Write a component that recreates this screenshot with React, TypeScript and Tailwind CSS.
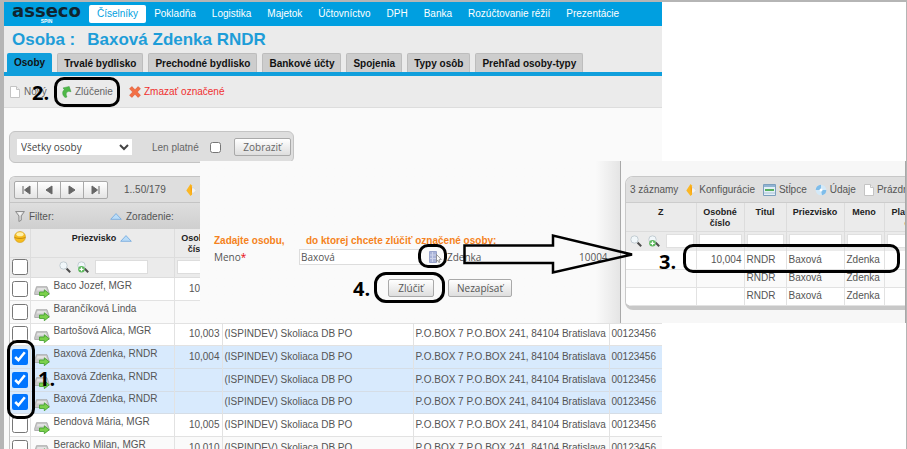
import type { ReactNode } from "react";

const NAV = [
  "Číselníky",
  "Pokladňa",
  "Logistika",
  "Majetok",
  "Účtovníctvo",
  "DPH",
  "Banka",
  "Rozúčtovanie réžií",
  "Prezentácie",
];

const TABS = [
  "Osoby",
  "Trvalé bydlisko",
  "Prechodné bydlisko",
  "Bankové účty",
  "Spojenia",
  "Typy osôb",
  "Prehľad osoby-typy",
];

const COMPANY = "(ISPINDEV) Skoliaca DB PO";
const ADDRESS = "P.O.BOX 7 P.O.BOX 241, 84104 Bratislava";

const PEOPLE = [
  { id: 1, name: "Baco Jozef, MGR", number: "10,001", selected: false },
  { id: 2, name: "Barančíková Linda", number: "", selected: false },
  { id: 3, name: "Bartošová Alica, MGR", number: "10,003", selected: false },
  { id: 4, name: "Baxová Zdenka, RNDR", number: "10,004", selected: true },
  { id: 5, name: "Baxová Zdenka, RNDR", number: "", selected: true },
  { id: 6, name: "Baxová Zdenka, RNDR", number: "", selected: true },
  { id: 7, name: "Bendová Mária, MGR", number: "10,005", selected: false },
  { id: 8, name: "Beracko Milan, MGR", number: "10,010", selected: false },
];

const MATCHES = [
  { id: 1, number: "10,004" },
  { id: 2, number: "" },
  { id: 3, number: "" },
];

const PageIcon = () => (
  <svg className="h-3 w-[10px] shrink-0" viewBox="0 0 10 12">
    <path d="M.5.5h6l3 3v8h-9z" fill="#fff" stroke="#c4c4c4" />
    <path d="M6.5.5v3h3" fill="#eee" stroke="#c4c4c4" />
  </svg>
);

const MergeIcon = () => (
  <svg className="h-3 w-[10px] shrink-0" viewBox="0 0 10 12">
    <path
      d="M3.200 11.600C.2 9.500-.2 5.500 2.300 3.700L1 1.900 7.200.5 9 5.700 6.800 5.300C4.300 5.800 3.300 8.200 5 11z"
      fill="#4fb848"
      stroke="#3a9a3f"
      strokeWidth=".5"
    />
  </svg>
);

const DeleteIcon = () => (
  <svg className="h-3 w-3 shrink-0" viewBox="0 0 12 12">
    <path
      d="M2.800.6 6 3.700 9.200.6l2.200 2.200L8.300 6l3.100 3.200-2.200 2.200L6 8.300l-3.200 3.100L.6 9.200 3.700 6 .6 2.800z"
      fill="#f27045"
      stroke="#dc5433"
      strokeWidth=".6"
    />
  </svg>
);

const BoltIcon = () => (
  <svg className="h-3 w-[10px] shrink-0" viewBox="0 0 10 12">
    <path d="M5 4h3l2 2.500L8 9H5z" fill="#f3f3f3" stroke="#cfcfcf" strokeWidth=".5" />
    <path d="M4.500 0 6 1.500v9L4.500 12 .3 6.500z" fill="#fbb724" />
    <path d="M4.500 1 6 5 5 11z" fill="#f59a0b" />
  </svg>
);

const FunnelIcon = () => (
  <svg className="h-3 w-[10px] shrink-0" viewBox="0 0 10 12">
    <path d="M.6 1.500h8.800L6.300 6v4.200l-2.400 1.300V6z" fill="#ddd" stroke="#8d8d8d" />
    <path d="M3 2.500h4L5 5.500z" fill="#f5f5f5" />
  </svg>
);

const SortIcon = () => (
  <svg className="h-[7px] w-3 shrink-0" viewBox="0 0 12 7">
    <path d="M6 .6 11.300 6.300H.7z" fill="#b9dcf8" stroke="#6fa6dd" strokeWidth=".8" />
  </svg>
);

const SearchIcon = ({ plus = false }: { plus?: boolean }) => (
  <svg className="h-3 w-3 shrink-0" viewBox="0 0 12 12">
    <path d="m7.500 7.500 3.700 3.700" stroke="#4d4d4d" strokeWidth="2" />
    <circle cx="4.500" cy="4.500" r="3.700" fill="#f1f7fa" stroke="#c2ccd2" />
    {plus && (
      <>
        <circle cx="4.500" cy="8.300" r="3.300" fill="#5cb85c" />
        <path d="M2.500 8.300h4M4.500 6.300v4" stroke="#fff" strokeWidth="1.200" />
      </>
    )}
  </svg>
);

const GoIcon = () => (
  <svg className="h-3 w-4 shrink-0" viewBox="0 0 16 12">
    <path d="M2.500.7h10.500L15 6.500v2H.7v-2z" fill="#c9c9c9" stroke="#a3a3a3" strokeWidth=".8" />
    <path d="M3.500 2h8.500l.8 2.500H2.700z" fill="#e2e2e2" />
    <path
      d="M5.500 6h4.800V3.800l5 4-5 3.900V9.500H5.500z"
      fill="#7bd04b"
      stroke="#3d9c2a"
      strokeWidth=".8"
    />
  </svg>
);

const BallIcon = () => (
  <svg className="h-3 w-3 shrink-0" viewBox="0 0 12 12">
    <circle cx="6" cy="6" r="5.500" fill="#f7bd1e" stroke="#cf9a1c" strokeWidth=".6" />
    <ellipse cx="6" cy="3.300" rx="3.600" ry="2" fill="#fff0a8" />
    <path d="M.6 6.500c3 1.300 7.800 1.300 10.800 0" stroke="#c58b0d" fill="none" />
  </svg>
);

const ColumnsIcon = () => (
  <svg className="h-3 w-[13px] shrink-0" viewBox="0 0 13 12">
    <path d="M.5.5h12v11H.5z" fill="#e4eff7" stroke="#7c9fbd" />
    <path d="M1 1h11v2H1z" fill="#8fb3d3" />
    <path d="M2 5h9v2H2z" fill="#55ae5e" />
    <path d="M1 9h11" stroke="#a9c3d8" />
  </svg>
);

const DataIcon = () => (
  <svg className="h-3 w-3 shrink-0" viewBox="0 0 12 12">
    <circle cx="6" cy="6" r="5.300" fill="#d3e9f8" />
    <path d="M.7 6A5.300 5.300 0 0 1 6 .7L6 6zM6 6h5.300A5.300 5.300 0 0 1 7 11.200z" fill="#7fbdea" />
    <circle cx="6" cy="6" r="1.500" fill="#fff" />
  </svg>
);

const LookupIcon = () => (
  <svg className="h-3 w-[13px]" viewBox="0 0 13 12">
    <path d="M.5.5h7v11h-7z" fill="#a9b3d8" stroke="#98a3cb" />
    <path d="M1 4h6M1 7.500h6M3.500 1v10" stroke="#cdd3ea" />
    <path
      d="m7.500 3.500 4.800 5-2.300.2 1 2.300-1.200.5-1-2.300-1.300 1.500z"
      fill="#fff"
      stroke="#777"
      strokeWidth=".7"
    />
  </svg>
);

const PAGER = [
  { label: "Prvá strana", d: "M3 1v8M10 1v8L4.500 5z" },
  { label: "Predchádzajúca strana", d: "M9 1v8L3 5z" },
  { label: "Nasledujúca strana", d: "M3 1v8l6-4z" },
  { label: "Posledná strana", d: "M2 1v8l5.500-4zM9 1v8" },
];

const GreyButton = ({ className, children }: { className: string; children: ReactNode }) => (
  <button
    type="button"
    className={`flex h-[18px] items-center justify-center rounded-[2px] border border-[#a9a9a9] bg-linear-to-b from-white to-[#dedede] font-['Open_Sans',sans-serif] ${className}`}
  >
    {children}
  </button>
);

const Ring = ({ className }: { className: string }) => (
  <div className={`pointer-events-none absolute border-[3px] border-black ${className}`} />
);

const Step = ({ className, children }: { className: string; children: ReactNode }) => (
  <span
    className={`pointer-events-none absolute font-['Open_Sans',sans-serif] text-[20px] leading-5 font-bold text-black ${className}`}
  >
    {children}
  </span>
);

const PeopleTable = () => (
  <table className="w-full table-fixed border-collapse bg-white text-[#555]">
    <colgroup>
      <col className="w-[20px]" />
      <col className="w-[144px]" />
      <col className="w-[48px]" />
      <col className="w-[191px]" />
      <col className="w-[196px]" />
      <col />
    </colgroup>
    <thead className="bg-[#ebebeb] text-[9px] leading-[11px] text-[#222]">
      <tr className="h-7 border-b border-[#ddd] align-top">
        <th className="border-r border-[#ddd] pt-[2px]">
          <span className="flex justify-center">
            <BallIcon />
          </span>
        </th>
        <th className="border-r border-[#ddd] pt-1">
          <span className="flex items-center justify-center gap-1">
            Priezvisko <SortIcon />
          </span>
        </th>
        <th className="border-r border-[#ddd] pt-1">
          Osobné
          <br />
          číslo
        </th>
        <th className="border-r border-[#ddd]" />
        <th className="border-r border-[#ddd]" />
        <th />
      </tr>
      <tr className="h-5 border-b border-[#ddd]">
        <td className="border-r border-[#ddd]">
          <input type="checkbox" aria-label="Označiť všetko" className="mx-auto block size-4" />
        </td>
        <td className="border-r border-[#ddd]">
          <div className="flex items-center gap-[6px] pl-7">
            <SearchIcon />
            <SearchIcon plus />
            <input aria-label="Priezvisko" className="h-[14px] w-[53px] border border-[#ddd] bg-white" />
          </div>
        </td>
        <td className="border-r border-[#ddd] px-[2px]">
          <input aria-label="Osobné číslo" className="block h-[14px] w-full border border-[#ddd] bg-white" />
        </td>
        <td className="border-r border-[#ddd]" />
        <td className="border-r border-[#ddd]" />
        <td />
      </tr>
    </thead>
    <tbody className="leading-3 whitespace-nowrap">
      {PEOPLE.map((person) => (
        <tr
          key={person.id}
          className={
            person.selected
              ? "h-[23px] border-b border-[#d5dde6] bg-[#d8eafd] nth-[3n]:h-[22px]"
              : "h-[23px] border-b border-[#e2e2e2] even:bg-[#fafafa] nth-[3n]:h-[22px]"
          }
        >
          <td className="border-r border-[#e2e2e2]">
            <input
              type="checkbox"
              defaultChecked={person.selected}
              aria-label={person.name}
              className="mx-auto block size-4"
            />
          </td>
          <td className="border-r border-[#e2e2e2]">
            <div className="flex h-[18px] items-end gap-1 pl-[3px]">
              <GoIcon />
              <span className="self-start">{person.name}</span>
            </div>
          </td>
          <td className="border-r border-[#e2e2e2] pr-[2px] text-right">{person.number}</td>
          <td className="border-r border-[#e2e2e2] pl-[2px]">{COMPANY}</td>
          <td className="border-r border-[#e2e2e2] pl-[2px]">{ADDRESS}</td>
          <td className="pl-[2px]">00123456</td>
        </tr>
      ))}
    </tbody>
  </table>
);

const MergeForm = () => (
  <form className="absolute top-[161px] left-[200px] flex h-[162px] w-[421px] flex-col bg-linear-to-r from-[#fafafa] from-94% to-[#e4e4e4] pt-[74px] text-[#555]">
    <div className="flex pl-[14px] font-bold leading-3 text-[#f58220]">
      <span className="w-[92px]">Zadajte osobu,</span>
      <span>do ktorej chcete zlúčiť označené osoby:</span>
    </div>
    <div className="mt-[2px] flex items-center pl-[14px] font-['Open_Sans',sans-serif]">
      <label htmlFor="meno" className="w-[85px]">
        Meno<span className="text-red-600">*</span>
      </label>
      <input
        id="meno"
        defaultValue="Baxová"
        className="h-4 w-[122px] border border-[#ddd] bg-white px-px"
      />
      <button type="button" aria-label="Vybrať osobu" className="ml-2">
        <LookupIcon />
      </button>
      <span className="ml-[5px] w-[132px]">Zdenka</span>
      <span>10004</span>
    </div>
    <div className="mt-[14px] flex gap-[14px] pl-[188px]">
      <GreyButton className="w-[46px]">Zlúčiť</GreyButton>
      <GreyButton className="w-16">Nezapísať</GreyButton>
    </div>
  </form>
);

const HEAD_CELL = "border-r border-[#dcdcdc] pt-1";
const MATCH_CELL = "border-r border-[#e2e2e2] px-[2px]";

const MatchesPanel = () => (
  <section className="absolute top-[161px] right-0 left-[620px] h-[162px] overflow-hidden border-x border-[#a9a9a9] bg-[#f7f7f7] pt-[15px] pl-1 whitespace-nowrap text-[#555]">
    <div className="w-[312px] overflow-hidden rounded-lg border border-b-4 border-[#c8c8c8]">
      <div className="flex h-[26px] items-center gap-[3px] border-b border-[#ccc] bg-[#dfdfdf] pl-1">
        <span className="mr-[5px]">3 záznamy</span>
        <BoltIcon />
        <span className="mr-[5px]">Konfigurácie</span>
        <ColumnsIcon />
        <span className="mr-[5px]">Stĺpce</span>
        <DataIcon />
        <span className="mr-[5px]">Údaje</span>
        <PageIcon />
        <span>Prázdne</span>
      </div>
      <table className="w-full table-fixed border-collapse bg-white">
        <colgroup>
          <col className="w-[70px]" />
          <col className="w-[48px]" />
          <col className="w-[42px]" />
          <col className="w-[58px]" />
          <col className="w-[40px]" />
          <col />
        </colgroup>
        <thead className="bg-[#ebebeb] text-[9px] leading-[11px] text-[#222]">
          <tr className="h-7 border-b border-[#dcdcdc] align-top">
            <th className={HEAD_CELL}>Z</th>
            <th className={HEAD_CELL}>
              Osobné
              <br />
              číslo
            </th>
            <th className={HEAD_CELL}>Titul</th>
            <th className={HEAD_CELL}>Priezvisko</th>
            <th className={HEAD_CELL}>Meno</th>
            <th className="pt-1">
              Platnosť
              <br />
              do
            </th>
          </tr>
          <tr className="h-5">
            <td className="border-r border-[#dcdcdc]">
              <div className="flex items-center gap-[6px] pr-[2px] pl-1">
                <SearchIcon />
                <SearchIcon plus />
                <input aria-label="Z" className="h-[14px] min-w-0 flex-1 border border-[#e0e0e0] bg-white" />
              </div>
            </td>
            {["Osobné číslo", "Titul", "Priezvisko", "Meno", "Platnosť"].map((label) => (
              <td key={label} className="border-r border-[#dcdcdc] px-[2px]">
                <input aria-label={label} className="block h-[14px] w-full border border-[#e0e0e0] bg-white" />
              </td>
            ))}
          </tr>
        </thead>
        <tbody className="leading-3">
          {MATCHES.map((match) => (
            <tr key={match.id} className="h-[18px] border-b border-[#e2e2e2] even:bg-[#fafafa]">
              <td className={MATCH_CELL} />
              <td className={`${MATCH_CELL} text-right`}>{match.number}</td>
              <td className={MATCH_CELL}>RNDR</td>
              <td className={MATCH_CELL}>Baxová</td>
              <td className={MATCH_CELL}>Zdenka</td>
              <td />
            </tr>
          ))}
        </tbody>
      </table>
    </div>
  </section>
);

const Annotations = () => (
  <>
    <Ring className="top-[77px] left-[54px] h-[30px] w-[66px] rounded-[10px]" />
    <Step className="top-[83px] left-8">2.</Step>
    <Ring className="top-[340px] left-[7px] h-[79px] w-7 rounded-[10px]" />
    <Step className="top-[369px] left-[38px]">1.</Step>
    <Ring className="top-[244px] left-[418px] h-6 w-[29px] rounded-[10px]" />
    <Ring className="top-[272px] left-[374px] h-[31px] w-[71px] rounded-[12px]" />
    <Step className="top-[279px] left-[353px]">4.</Step>
    <Ring className="top-[244px] left-[683px] h-[29px] w-[217px] rounded-[10px]" />
    <Step className="top-[252px] left-[659px]">3.</Step>
    <svg
      className="pointer-events-none absolute top-[232px] left-[462px] h-11 w-[176px]"
      viewBox="0 0 176 44"
    >
      <path
        d="M2.500 13.500H91V3.500L170 22.500 91 40.500V31H2.500z"
        fill="none"
        stroke="#000"
        strokeWidth="2.500"
      />
    </svg>
  </>
);

export default function App() {
  return (
    <div className="relative h-screen overflow-hidden border-t-2 border-r border-[#b5b5b5] bg-white pr-[244px] font-['Liberation_Sans',Arial,sans-serif] text-[10px] leading-[15px]">
      <div className="min-h-full border-l-4 border-[#b5b5b5] bg-[#fafafa]">
        <header className="flex h-6 items-center bg-[#009fe0] whitespace-nowrap text-white">
          <div className="flex w-[85px] flex-col items-center">
            <span className="font-['DejaVu_Sans',sans-serif] text-[18px] leading-[15px] font-bold text-[#10242f]">
              asseco
            </span>
            <span className="text-[5px] leading-[7px] font-bold">SPIN</span>
          </div>
          <nav className="flex">
            {NAV.map((item, index) => (
              <a
                key={item}
                href="#"
                className={
                  index === 0
                    ? "rounded-[2px] bg-white px-2 leading-[18px] text-[#009fe0]"
                    : "px-2 leading-[18px]"
                }
              >
                {item}
              </a>
            ))}
          </nav>
        </header>

        <div className="bg-[#ebebeb]">
          <h1 className="flex h-[27px] items-center gap-3 pl-2 text-[17px] font-bold text-[#1e9dd8]">
            <span>Osoba :</span>
            <span>Baxová Zdenka RNDR</span>
          </h1>
          <div className="flex gap-[5px] border-b-4 border-[#109fdc] pl-[3px] font-bold whitespace-nowrap text-[#111]">
            {TABS.map((tab, index) => (
              <button
                key={tab}
                type="button"
                className={
                  index === 0
                    ? "h-[19px] rounded-t-[2px] bg-[#109fdc] px-[7px]"
                    : "h-[19px] rounded-t-[2px] border border-b-0 border-[#bdbdbd] bg-[#cdcdcd] px-[6px]"
                }
              >
                {tab}
              </button>
            ))}
          </div>
          <div className="flex h-8 items-center border-b border-[#ddd] pl-[6px] text-[#666]">
            <button type="button" className="flex w-[52px] items-center gap-1">
              <PageIcon /> Nový
            </button>
            <button type="button" className="flex w-[67px] items-center gap-[3px]">
              <MergeIcon /> Zlúčenie
            </button>
            <button type="button" className="flex items-center gap-[3px] text-[#f03030]">
              <DeleteIcon /> Zmazať označené
            </button>
          </div>
        </div>

        <div className="pt-[23px] pl-[5px]">
          <div className="flex h-8 w-[285px] items-center rounded-md border border-[#c4c4c4] bg-[#dedede] pl-[7px] text-[#666]">
            <select
              aria-label="Výber osôb"
              className="h-4 w-[115px] bg-white font-['Open_Sans',sans-serif] text-[#444]"
            >
              <option>Všetky osoby</option>
            </select>
            <label htmlFor="valid" className="ml-5 w-[58px] whitespace-nowrap">
              Len platné
            </label>
            <input id="valid" type="checkbox" className="size-[11px]" />
            <GreyButton className="ml-[13px] w-[57px]">Zobraziť</GreyButton>
          </div>

          <div className="mt-[13px] overflow-hidden rounded-tl-md border-t border-l border-[#c4c4c4] text-[#555]">
            <div className="flex h-[26px] items-center border-b border-[#c4c4c4] bg-[#dedede] pl-1">
              <div className="flex h-[18px] divide-x divide-[#a9a9a9] rounded-[2px] border border-[#a9a9a9] bg-linear-to-b from-white to-[#e4e4e4]">
                {PAGER.map((button) => (
                  <button
                    key={button.label}
                    type="button"
                    aria-label={button.label}
                    className="flex w-[23px] items-center justify-center"
                  >
                    <svg className="h-[10px] w-3" viewBox="0 0 12 10">
                      <path d={button.d} fill="#666" stroke="#666" />
                    </svg>
                  </button>
                ))}
              </div>
              <span className="ml-4 w-[62px]">1..50/179</span>
              <BoltIcon />
            </div>
            <div className="flex h-[26px] items-center gap-1 bg-linear-to-b from-[#dedede] to-[#cfcfcf] pl-[5px]">
              <FunnelIcon />
              <span className="w-[77px]">Filter:</span>
              <SortIcon />
              <span>Zoradenie:</span>
            </div>
            <PeopleTable />
          </div>
        </div>
      </div>

      {/* windows over the list, pulled up over the page's top border */}
      <div className="absolute inset-x-0 -top-[2px] bottom-0">
        <MergeForm />
        <MatchesPanel />
        <Annotations />
      </div>
    </div>
  );
}
